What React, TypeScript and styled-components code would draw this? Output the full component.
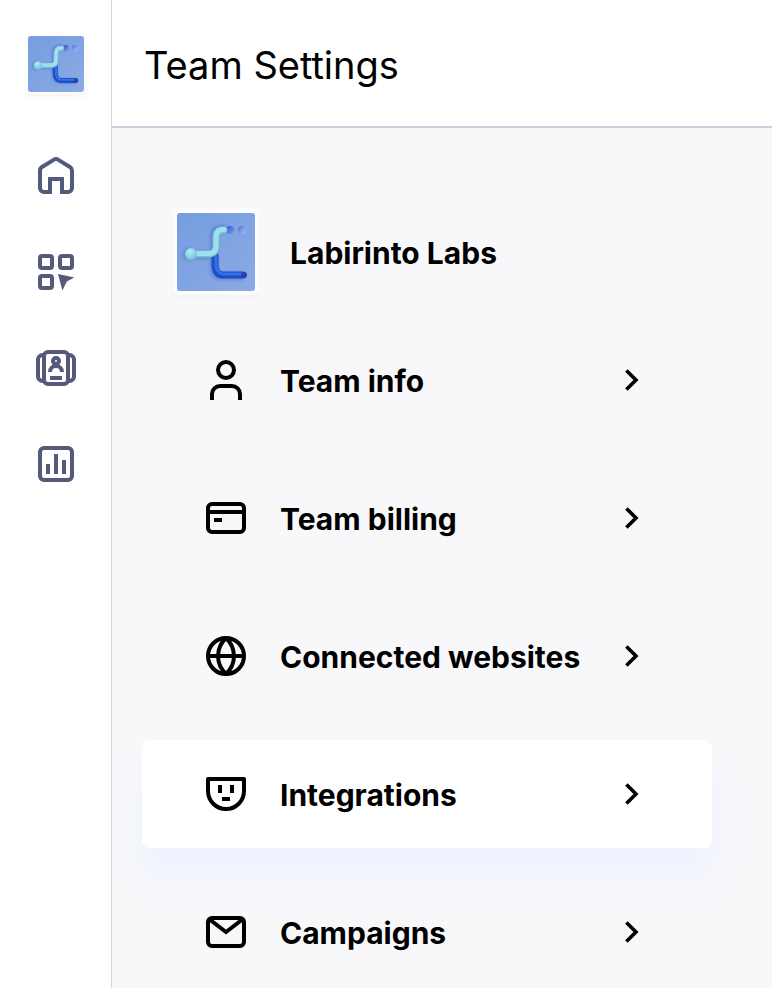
import React from "react";
import styled, { createGlobalStyle, css } from "styled-components";

const GlobalStyle = createGlobalStyle`
  *, *::before, *::after { box-sizing: border-box; }
  body {
    margin: 0;
    background: #f8f8fb;
    color: #000;
    font-family: Inter, "Liberation Sans", sans-serif;
  }
`;

const Layout = styled.div`
  display: flex;
  height: 100vh;
  overflow: hidden;
`;

const Sidebar = styled.aside`
  flex: 0 0 112px;
  display: flex;
  flex-direction: column;
  align-items: center;
  gap: 60px;
  padding-top: 36px;
  background: #fff;
  border-right: 1px solid #d6d6de;
`;

const SideNav = styled.nav`
  display: flex;
  flex-direction: column;
  gap: 48px;
`;

const SideLink = styled.a`
  display: block;
  height: 48px;
  color: #535a7b;
`;

const Main = styled.main`
  flex: 1;
  min-width: 0;
  display: flex;
  flex-direction: column;
`;

const Header = styled.header`
  flex: none;
  display: flex;
  align-items: center;
  height: 128px;
  padding: 4px 32px 0;
  background: #fff;
  border-bottom: 2px solid #cfcfdd;
`;

const Title = styled.h1`
  margin: 0;
  font-size: 38px;
  line-height: 48px;
  font-weight: 400;
`;

const Content = styled.div`
  flex: 1;
  padding: 85px 60px 0 30px;
`;

const Team = styled.div`
  display: flex;
  align-items: center;
  gap: 35px;
  padding-left: 35px;
  margin-bottom: 35px;
`;

const TeamName = styled.h2`
  margin: 0;
  padding-top: 2px;
  font-size: 30px;
  line-height: 40px;
  font-weight: 700;
`;

const BrandTile = styled.span<{ $size: number; $halo: number }>`
  display: block;
  flex: none;
  width: ${(p) => p.$size}px;
  height: ${(p) => p.$size}px;
  border-radius: 3px;
  overflow: hidden;
  box-shadow: 0 0 2px ${(p) => p.$halo}px #fdfdfe, 0 3px 6px 1px rgba(70, 70, 100, 0.08);
`;

const Menu = styled.ul`
  display: flex;
  flex-direction: column;
  gap: 30px;
  margin: 0;
  padding: 0;
  list-style: none;
`;

const MenuLink = styled.a<{ $active?: boolean }>`
  display: flex;
  align-items: center;
  height: 108px;
  padding: 0 56px 0 60px;
  border-radius: 8px;
  color: #000;
  text-decoration: none;
  ${(p) =>
    p.$active &&
    css`
      background: #fff;
      box-shadow: 0 28px 36px #edf2fe;
    `}
`;

const MenuLabel = styled.span`
  flex: 1;
  margin-left: 30px;
  padding-top: 2px;
  font-size: 30px;
  line-height: 40px;
  font-weight: 700;
  white-space: nowrap;
`;

const Glyph = styled.svg.attrs({ viewBox: "0 0 24 24", "aria-hidden": true })`
  display: block;
  flex: none;
  width: 48px;
  height: 48px;
  fill: none;
  stroke: currentColor;
  stroke-width: 2;

  .solid {
    fill: currentColor;
    stroke: none;
  }
`;

const BrandSvg = styled.svg`
  display: block;
  width: 100%;
  height: 100%;
`;

function Brand({ size, halo, id }: { size: number; halo: number; id: string }) {
  const ref = (name: string) => `url(#${id}-${name})`;
  return (
    <BrandTile $size={size} $halo={halo}>
      <BrandSvg viewBox="0 0 78 78" role="img" aria-label="Labirinto Labs">
        <defs>
          <linearGradient id={`${id}-bg`} x1="0" y1="0" x2="1" y2="1">
            <stop offset="0" stopColor="#749de0" />
            <stop offset="1" stopColor="#8daae4" />
          </linearGradient>
          <radialGradient id={`${id}-ball`} cx="0.4" cy="0.32" r="0.7">
            <stop offset="0" stopColor="#b5eef2" />
            <stop offset="1" stopColor="#70bfd8" />
          </radialGradient>
          <linearGradient id={`${id}-hole`} x1="0" y1="0" x2="1" y2="1">
            <stop offset="0.2" stopColor="#3b61ca" />
            <stop offset="1" stopColor="#7da4ee" />
          </linearGradient>
          <linearGradient id={`${id}-hole2`} x1="0" y1="0" x2="1" y2="1">
            <stop offset="0" stopColor="#4f72cc" />
            <stop offset="1" stopColor="#a5c4f8" />
          </linearGradient>
          <filter id={`${id}-soft`} x="-30%" y="-30%" width="160%" height="160%">
            <feGaussianBlur stdDeviation="1.5" />
          </filter>
        </defs>
        <rect width="78" height="78" fill={ref("bg")} />
        <g filter={ref("soft")} fill="none" stroke="#4d6fc5" strokeWidth="8" opacity="0.55">
          <path d="M12 42H33Q37 41 37 36V24Q37 16 45 16H49" />
          <path d="M37 43V55Q37 63 45 63H67" />
          <circle cx="12" cy="41" r="2" />
        </g>
        <circle cx="53" cy="17" r="4.3" fill={ref("hole")} />
        <circle cx="65" cy="17" r="4.3" fill={ref("hole2")} />
        <g fill="none" strokeLinecap="round">
          <path d="M38 43V53Q39 62 46 62H66" stroke="#1d4cc5" strokeWidth="7" />
          <path d="M39 43V53Q40 60 46 61H65" stroke="#3472e4" strokeWidth="3" />
          <path d="M15 41H33Q39 40 39 34V25Q39 17 46 17H47" stroke="#74bdd8" strokeWidth="7" />
          <path d="M15 40.5H33Q39 39.5 39 33V25Q39 16.5 46 16.5H47" stroke="#9fe0ea" strokeWidth="5" />
        </g>
        <circle cx="67" cy="62" r="3" fill="#2b3fae" />
        <circle cx="14" cy="41" r="6" fill={ref("ball")} />
      </BrandSvg>
    </BrandTile>
  );
}

const sideItems = [
  {
    label: "Home",
    icon: (
      <path d="M9 20H6a2 2 0 0 1-2-2V9.2a2 2 0 0 1 1-1.7l6-3.7a2 2 0 0 1 2 0l6 3.7a2 2 0 0 1 1 1.7V18a2 2 0 0 1-2 2h-3v-6.5H9z" />
    ),
  },
  {
    label: "Apps",
    icon: (
      <>
        <rect x="4" y="4" width="6" height="6" rx="1" />
        <rect x="14" y="4" width="6" height="6" rx="1" />
        <rect x="4" y="14" width="6" height="6" rx="1" />
        <path className="solid" d="M13 13L21.2 14.8L17.4 16.8L15.2 21.2Z" />
      </>
    ),
  },
  {
    label: "Contacts",
    icon: (
      <>
        <rect x="6" y="4" width="12" height="16" rx="2" />
        <path d="M6.5 5.5H5.3A2.3 2.3 0 0 0 3 7.8v8.4a2.3 2.3 0 0 0 2.3 2.3h1.2M17.5 5.5h1.2A2.3 2.3 0 0 1 21 7.8v8.4a2.3 2.3 0 0 1-2.3 2.3h-1.2" />
        <circle cx="12" cy="8.5" r="1.5" />
        <path d="M9 14a3 3 0 0 1 6 0" />
        <path className="solid" d="M9 16h6v2H9z" />
      </>
    ),
  },
  {
    label: "Analytics",
    icon: (
      <>
        <rect x="4" y="4" width="16" height="16" rx="2" />
        <path d="M8 17v-5M12 17V7M16 17v-7" />
      </>
    ),
  },
];

const menuItems = [
  {
    label: "Team info",
    icon: (
      <>
        <circle cx="12" cy="7" r="4" />
        <path d="M5 22v-3a4 4 0 0 1 4-4h6a4 4 0 0 1 4 4v3" />
      </>
    ),
  },
  {
    label: "Team billing",
    icon: (
      <>
        <rect x="3" y="5" width="18" height="14" rx="2" />
        <path d="M3 9h18M6 13h4" />
      </>
    ),
  },
  {
    label: "Connected websites",
    icon: (
      <>
        <circle cx="12" cy="12" r="9" />
        <path d="M3 12h18M12 3C6.7 8 6.7 16 12 21M12 3C17.3 8 17.3 16 12 21" />
      </>
    ),
  },
  {
    label: "Integrations",
    active: true,
    icon: (
      <>
        <path d="M3 4.5h18v6a9 9 0 0 1-18 0z" strokeLinejoin="round" />
        <path d="M9 7.5v4M15 7.5v4M10 14.5h4" />
      </>
    ),
  },
  {
    label: "Campaigns",
    icon: (
      <>
        <rect x="3" y="5" width="18" height="14" rx="2" />
        <path d="M3.5 5.5L12 12l8.5-6.5" />
      </>
    ),
  },
];

export default function App() {
  return (
    <>
      <GlobalStyle />
      <Layout>
        <Sidebar>
          <Brand size={56} halo={2} id="side" />
          <SideNav aria-label="Main">
            {sideItems.map((item) => (
              <SideLink key={item.label} href="#" aria-label={item.label}>
                <Glyph>{item.icon}</Glyph>
              </SideLink>
            ))}
          </SideNav>
        </Sidebar>
        <Main>
          <Header>
            <Title>Team Settings</Title>
          </Header>
          <Content>
            <Team>
              <Brand size={78} halo={4} id="team" />
              <TeamName>Labirinto Labs</TeamName>
            </Team>
            <Menu>
              {menuItems.map((item) => (
                <li key={item.label}>
                  <MenuLink href="#" $active={item.active} aria-current={item.active ? "page" : undefined}>
                    <Glyph>{item.icon}</Glyph>
                    <MenuLabel>{item.label}</MenuLabel>
                    <Glyph>
                      <path d="M9.2 7.2L14 12l-4.8 4.8" strokeWidth="1.8" />
                    </Glyph>
                  </MenuLink>
                </li>
              ))}
            </Menu>
          </Content>
        </Main>
      </Layout>
    </>
  );
}
